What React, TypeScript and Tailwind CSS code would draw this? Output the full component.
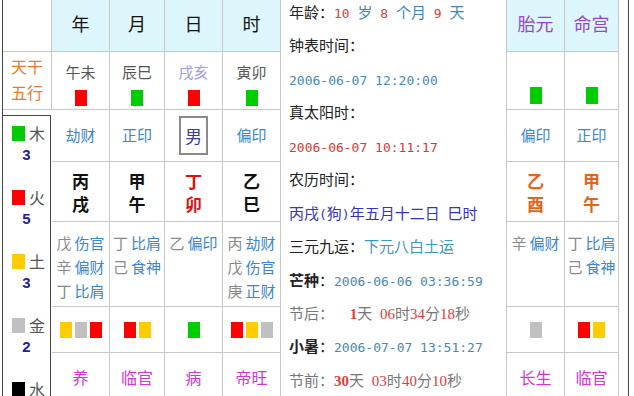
import React from "react";

const CJK = "font-['Noto_Sans_CJK_SC',sans-serif]";
const MONO = "font-['DejaVu_Sans_Mono','Noto_Sans_CJK_SC',monospace]";
const SERIF = "font-['Liberation_Serif','Noto_Sans_CJK_SC',serif]";

const line = "border-r border-b border-[#c8c8c8]";

const colors: Record<string, string> = {
  r: "bg-[#ff0000]",
  g: "bg-[#00cc00]",
  y: "bg-[#ffcc00]",
  s: "bg-[#c0c0c0]",
  k: "bg-[#000000]",
};

function Sq({ c, h = "h-[16px]" }: { c: string; h?: string }) {
  return <span className={`inline-block w-[12px] ${h} ${colors[c]}`} />;
}

function Header({ t, purple }: { t: string; purple?: boolean }) {
  return (
    <div className={`${line} bg-[#ddf6fc] flex items-center justify-center pb-[4px]`}>
      <span className={`text-[18px] ${purple ? "text-[#9a44d4]" : "text-[#111]"}`}>{t}</span>
    </div>
  );
}

function Branch({ t, c, color = "text-[#555]" }: { t: string; c: string; color?: string }) {
  return (
    <div className={`${line} flex flex-col items-center pt-[9px]`}>
      <span className={`text-[15px] leading-[22px] ${color}`}>{t}</span>
      <span className="mt-[4px]">
        <Sq c={c} />
      </span>
    </div>
  );
}

function OnlySq({ c }: { c: string }) {
  return (
    <div className={`${line} flex flex-col items-center pt-[35px]`}>
      <Sq c={c} h="h-[17px]" />
    </div>
  );
}

function God({ t }: { t: string }) {
  return (
    <div className={`${line} flex items-center justify-center`}>
      <span className="text-[15px] text-[#3a86d0]">{t}</span>
    </div>
  );
}

function Pillar({ a, b, color }: { a: string; b: string; color: string }) {
  return (
    <div className={`${line} flex flex-col items-center justify-center`}>
      <span className={`text-[17px] leading-[23px] font-bold ${color}`}>{a}</span>
      <span className={`text-[17px] leading-[23px] font-bold ${color}`}>{b}</span>
    </div>
  );
}

function Hidden({ items }: { items: [string, string][] }) {
  return (
    <div className={`${line} flex flex-col items-center pt-[9px]`}>
      {items.map(([s, g], i) => (
        <div key={i} className="text-[15px] leading-[24px] whitespace-nowrap">
          <span className="text-[#8a8a8a] mr-[3px]">{s}</span>
          <span className="text-[#3a86d0]">{g}</span>
        </div>
      ))}
    </div>
  );
}

function Squares({ cs }: { cs: string[] }) {
  return (
    <div className={`${line} flex items-center justify-center gap-[3px]`}>
      {cs.map((c, i) => (
        <Sq key={i} c={c} />
      ))}
    </div>
  );
}

function Stage({ t }: { t: string }) {
  return (
    <div className={`${line} flex justify-center pt-[13px]`}>
      <span className="text-[16px] leading-[22px] text-[#d236d2]">{t}</span>
    </div>
  );
}

function Element({ c, t, n }: { c: string; t: string; n: string }) {
  return (
    <div className="flex flex-col mb-[20px]">
      <div className="flex items-center h-[22px] pl-[9px] gap-[4px]">
        <span className={`inline-block w-[13px] h-[15px] ${colors[c]}`} />
        <span className="text-[16px] leading-[22px] text-[#555]">{t}</span>
      </div>
      <div className="h-[22px] text-center text-[15px] leading-[22px] font-bold text-[#22229a] font-['Liberation_Sans',sans-serif]">{n}</div>
    </div>
  );
}

const rows = "grid-rows-[52px_58px_52px_60px_85px_46px_60px]";
const L = "h-[33.45px] leading-[33.45px] overflow-visible whitespace-pre";
const M = `${MONO} text-[13px] leading-none`;
const S = `${SERIF} leading-none`;

export default function App() {
  const red = "text-[#e23a3a]";
  const teal = "text-[#3b8ab5]";
  const steel = "text-[#4a88b4]";
  const gray = "text-[#777]";
  return (
    <div className={`w-[634px] h-[396px] overflow-hidden bg-white flex ${CJK}`}>
      <div className="w-[3px] shrink-0 border-r border-[#444]" />
      {/* left table */}
      <div className={`grid grid-cols-[49px_58px_55px_58px_58px] ${rows} shrink-0`}>
        <div className={line} />
        <Header t="年" />
        <Header t="月" />
        <Header t="日" />
        <Header t="时" />

        <div className={`${line} flex flex-col items-center pt-[1px]`}>
          <span className="text-[16px] leading-[26px] text-[#ee7a2c]">天干</span>
          <span className="text-[16px] leading-[26px] text-[#ee7a2c]">五行</span>
        </div>
        <Branch t="午未" c="r" />
        <Branch t="辰巳" c="g" />
        <Branch t="戌亥" c="r" color="text-[#a09ae6]" />
        <Branch t="寅卯" c="g" />

        <div className="row-span-5 pr-[1px]">
          <div className="mt-[5px] h-full border-t border-r border-[#444] pt-[6px]">
            <Element c="g" t="木" n="3" />
            <Element c="r" t="火" n="5" />
            <Element c="y" t="土" n="3" />
            <Element c="s" t="金" n="2" />
            <Element c="k" t="水" n="" />
          </div>
        </div>
        <God t="劫财" />
        <God t="正印" />
        <div className={`${line} flex items-start justify-center pt-[6px]`}>
          <div className="w-[29px] h-[39px] border-2 border-[#8a8a8a] flex items-center justify-center">
            <span className="text-[17px] text-[#3c3ca0]">男</span>
          </div>
        </div>
        <God t="偏印" />

        <Pillar a="丙" b="戌" color="text-[#111]" />
        <Pillar a="甲" b="午" color="text-[#111]" />
        <Pillar a="丁" b="卯" color="text-[#e01010]" />
        <Pillar a="乙" b="巳" color="text-[#111]" />

        <Hidden items={[["戊", "伤官"], ["辛", "偏财"], ["丁", "比肩"]]} />
        <Hidden items={[["丁", "比肩"], ["己", "食神"]]} />
        <Hidden items={[["乙", "偏印"]]} />
        <Hidden items={[["丙", "劫财"], ["戊", "伤官"], ["庚", "正财"]]} />

        <Squares cs={["y", "s", "r"]} />
        <Squares cs={["r", "y"]} />
        <Squares cs={["g"]} />
        <Squares cs={["r", "y", "s"]} />

        <Stage t="养" />
        <Stage t="临官" />
        <Stage t="病" />
        <Stage t="帝旺" />
      </div>

      {/* info column */}
      <div className="w-[226px] shrink-0 border-r border-[#c8c8c8] pl-[8px]">
        <div className="-mt-[5px] text-[15px] text-[#222]">
          <div className={L}>
            年龄：<span className={`${M} ${red}`}>10 </span>
            <span className={teal}>岁</span>
            <span className={`${M} ${red}`}> 8 </span>
            <span className={teal}>个月</span>
            <span className={`${M} ${red}`}> 9 </span>
            <span className={teal}>天</span>
          </div>
          <div className={L}>钟表时间：</div>
          <div className={L}>
            <span className={`${M} ${steel}`}>2006-06-07 12:20:00</span>
          </div>
          <div className={L}>真太阳时：</div>
          <div className={L}>
            <span className={`${M} text-[#e03535]`}>2006-06-07 10:11:17</span>
          </div>
          <div className={L}>农历时间：</div>
          <div className={`${L} text-[#3434bb]`}>
            丙戌<span className={M}>(</span>狗<span className={M}>)</span>年五月十二日<span className={M}> </span>巳时
          </div>
          <div className={L}>
            三元九运：<span className="text-[#3a9ab8]">下元八白土运</span>
          </div>
          <div className={L}>
            <span className="font-bold">芒种</span>：<span className={`${M} ${steel}`}>2006-06-06 03:36:59</span>
          </div>
          <div className={`${L} ${gray}`}>
            节后：<span className={M}>{"  "}</span>
            <span className={`${S} font-bold ${red}`}>1</span>天<span className={M}> </span>
            <span className={`${S} ${red}`}>06</span>时<span className={`${S} ${red}`}>34</span>分<span className={`${S} ${red}`}>18</span>秒
          </div>
          <div className={L}>
            <span className="font-bold">小暑</span>：<span className={`${M} ${steel}`}>2006-07-07 13:51:27</span>
          </div>
          <div className={`${L} ${gray}`}>
            节前：<span className={`${S} font-bold ${red}`}>30</span>天<span className={M}> </span>
            <span className={`${S} ${red}`}>03</span>时<span className={`${S} ${red}`}>40</span>分<span className={`${S} ${red}`}>10</span>秒
          </div>
        </div>
      </div>

      {/* right table */}
      <div className={`grid grid-cols-[58px_54px] ${rows} shrink-0`}>
        <Header t="胎元" purple />
        <Header t="命宫" purple />
        <OnlySq c="g" />
        <OnlySq c="g" />
        <God t="偏印" />
        <God t="正印" />
        <Pillar a="乙" b="酉" color="text-[#e8621a]" />
        <Pillar a="甲" b="午" color="text-[#e8621a]" />
        <Hidden items={[["辛", "偏财"]]} />
        <Hidden items={[["丁", "比肩"], ["己", "食神"]]} />
        <Squares cs={["s"]} />
        <Squares cs={["r", "y"]} />
        <Stage t="长生" />
        <Stage t="临官" />
      </div>
      <div className="w-[10px] shrink-0 border-r border-[#444]" />
    </div>
  );
}
